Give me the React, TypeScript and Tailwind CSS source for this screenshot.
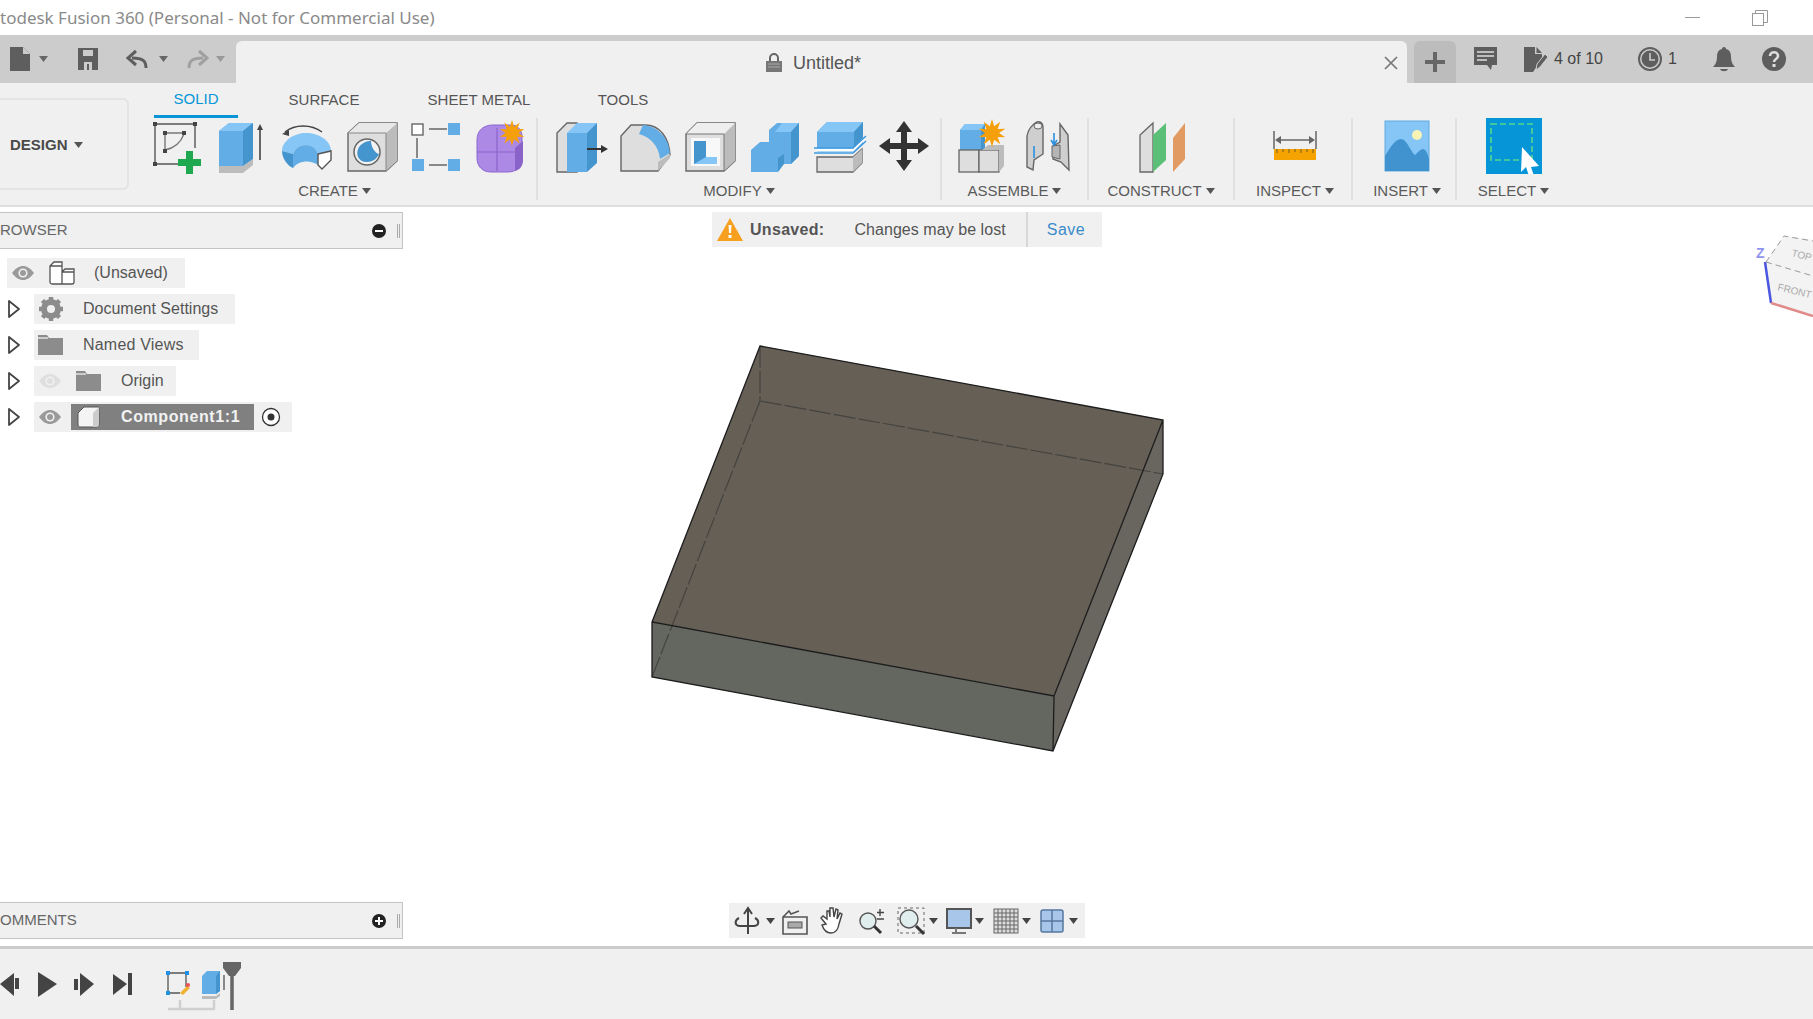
import React from "react";

const FONT = "[font-family:'Liberation_Sans',Arial,sans-serif]";

const Caret = ({ color = "#555", className = "" }: { color?: string; className?: string }) => (
    <svg width="9" height="6" viewBox="0 0 9 6" className={className}>
        <path d="M0 0h9L4.5 6z" fill={color} />
    </svg>
);

const Cell = ({ children, w = 64.7 }: { children: React.ReactNode; w?: number }) => (
    <div className="flex h-[56px] items-center justify-center" style={{ width: w }}>
        <svg width="56" height="56" viewBox="0 0 56 56">{children}</svg>
    </div>
);

const BLUE = "#62ade6";
const DARK = "#4494cd";
const LIGHT = "#86c6f7";
const GREY = "#dedede";
const SIDE = "#bcbcbc";
const LINE = "#666";

// toolbar icons
const SketchIcon = () => (
    <Cell>
        <g stroke="#555" strokeWidth="1.4" fill="none">
            <path d="M5 6h40M5 6v40M5 46h26M45 6v24" />
            <path d="M16 15h18M15 16v18M15 32c10-2 16-8 19-16" stroke="#777" />
        </g>
        <g fill="#444">
            <rect x="3" y="4" width="4" height="4" />
            <rect x="43" y="4" width="4" height="4" />
            <rect x="3" y="44" width="4" height="4" />
            <rect x="13" y="13" width="4" height="4" />
            <rect x="32" y="13" width="4" height="4" />
            <rect x="13" y="31" width="4" height="4" />
        </g>
        <path d="M36 33h7v8h8v7h-8v8h-7v-8h-8v-7h8z" fill="#1ea84f" />
    </Cell>
);
const ExtrudeIcon = () => (
    <Cell>
        <path d="M5 13l10-8h24v36l-10 7H5z" fill={BLUE} />
        <path d="M5 13l10-8h24l-10 8z" fill={LIGHT} />
        <path d="M29 13l10-8v36l-10 7z" fill={DARK} />
        <path d="M5 48h24l10-7v6l-10 8H5z" fill={SIDE} />
        <path d="M46 42V10" stroke="#444" strokeWidth="1.6" />
        <path d="M43 12l3-6 3 6z" fill="#444" />
    </Cell>
);
const RevolveIcon = () => (
    <Cell>
        <path d="M6 14c10-8 26-8 37 0" fill="none" stroke="#444" strokeWidth="1.5" />
        <path d="M3 16l7-4 0 6z" fill="#444" />
        <path d="M3 33c0-10 12-18 24-18s25 7 25 18l-13 3c-2-6-6-9-12-9s-11 3-13 9z" fill={LIGHT} />
        <path d="M3 33l11 3c1 5 1 10 0 14-5-2-11-9-11-17z" fill={DARK} />
        <path d="M14 36c2-6 7-9 13-9s10 3 12 9v11c-7-5-19-5-25 3z" fill={BLUE} />
        <path d="M39 36l13-3v9l-9 9-4-4z" fill="#fff" stroke="#555" strokeWidth="1.4" />
    </Cell>
);
const HoleIcon = () => (
    <Cell>
        <path d="M4 15L15 5h38v38L42 53H4z" fill={GREY} stroke={LINE} strokeWidth="1.4" />
        <path d="M42 15L53 5v38L42 53z" fill={SIDE} />
        <path d="M4 15L15 5h38L42 15z" fill="#e8e8e8" />
        <path d="M42 15H4M42 15v38" stroke="#888" strokeWidth="1" fill="none" />
        <circle cx="23" cy="34" r="13" fill="#f2f2f2" stroke={LINE} strokeWidth="1.5" />
        <path d="M15 29c4-5 8-6 12-6 0 6 4 12 8 13-2 5-7 8-12 8-9 0-12-8-8-15z" fill={DARK} />
    </Cell>
);
const PatternIcon = () => (
    <Cell>
        <path d="M8 20v20M20 11h18M20 47h18" stroke="#666" strokeWidth="1.5" />
        <rect x="3" y="6" width="11" height="11" fill="#fff" stroke="#666" strokeWidth="1.4" />
        <rect x="39" y="5" width="12" height="12" fill={BLUE} />
        <rect x="3" y="41" width="12" height="12" fill={BLUE} />
        <rect x="39" y="41" width="12" height="12" fill={BLUE} />
    </Cell>
);
const Star = ({ x, y, r }: { x: number; y: number; r: number }) => {
    const pts: string[] = [];
    for (let i = 0; i < 20; i++) {
        const a = (i * Math.PI) / 10;
        const rad = i % 2 ? r * 0.5 : r;
        pts.push(`${x + rad * Math.sin(a)},${y - rad * Math.cos(a)}`);
    }
    return <polygon points={pts.join(" ")} fill="#f59f0b" />;
};
const FormIcon = () => (
    <Cell>
        <path d="M4 22c0-10 7-15 16-15h18c6 0 10 4 11 10v24c0 8-6 13-14 13H18C9 54 4 48 4 40z" fill="#ad89e6" stroke="#8c67cf" strokeWidth="1" />
        <path d="M42 30l8-7v19c0 7-4 10-8 11z" fill="#8a63c8" />
        <path d="M4 34h38M24 10v43" stroke="#8a63c8" strokeWidth="1.2" />
        <Star x={39} y={15} r={13} />
    </Cell>
);
const PressPullIcon = () => (
    <Cell>
        <path d="M4 54V15L14 5h10v49z" fill={GREY} stroke={LINE} strokeWidth="1.4" />
        <path d="M14 15L24 5h20v4L34 15z" fill={LIGHT} />
        <path d="M14 15h20v39H14z" fill={BLUE} />
        <path d="M34 15L44 5v40L34 54z" fill={DARK} />
        <path d="M34 31h16" stroke="#333" strokeWidth="2" />
        <path d="M48 27l7 4-7 4z" fill="#333" />
    </Cell>
);
const FilletIcon = () => (
    <Cell>
        <path d="M4 53V18L14 7h14c16 0 24 14 25 30L41 53z" fill={GREY} stroke={LINE} strokeWidth="1.4" />
        <path d="M26 7c15 1 26 14 27 28l-10 6c-1-12-9-22-21-25z" fill={BLUE} />
        <path d="M41 53l12-13V36L41 44z" fill={SIDE} />
    </Cell>
);
const ShellIcon = () => (
    <Cell>
        <path d="M4 16L15 5h38v38L42 53H4z" fill={GREY} stroke={LINE} strokeWidth="1.4" />
        <path d="M42 16L53 5v38L42 53z" fill={SIDE} />
        <path d="M4 16L15 5h38L42 16z" fill="#eeeeee" />
        <path d="M42 16H4M42 16v37" stroke="#777" strokeWidth="1" />
        <rect x="9" y="20" width="29" height="28" fill="#f8f8f8" />
        <path d="M12 23h12v16h11v7H12z" fill={DARK} />
        <path d="M24 39h11v7H12z" fill={LIGHT} />
    </Cell>
);
const CombineIcon = () => (
    <Cell>
        <path d="M22 12l8-7h22v33l-8 8H26V28l-4-4z" fill={BLUE} />
        <path d="M28 14l7-9h17l-8 9z" fill={LIGHT} />
        <path d="M44 14l8-9v33l-8 8z" fill={DARK} />
        <path d="M4 32l9-8h18v30H4z" fill={BLUE} />
        <path d="M31 40l6-4v10l-6 8z" fill={DARK} />
    </Cell>
);
const OffsetIcon = () => (
    <Cell>
        <path d="M5 14L15 4h36v22L42 34H5z" fill={BLUE} />
        <path d="M5 14L15 4h36l-9 10z" fill={LIGHT} />
        <path d="M42 14l9-10v22l-9 8z" fill={DARK} />
        <path d="M5 32h36l11-11" fill="none" stroke="#fff" strokeWidth="3" />
        <path d="M2 30h39l13-12M2 35h39l13-12" fill="none" stroke="#3d9ae0" strokeWidth="1.6" />
        <path d="M5 39h36l9-8v14l-9 9H5z" fill={GREY} stroke={LINE} strokeWidth="1.3" />
        <path d="M41 39l9-8v14l-9 9z" fill={SIDE} />
    </Cell>
);
const MoveIcon = () => (
    <Cell>
        <path d="M28 3l8 11h-5v11h11v-5l11 8-11 8v-5H31v11h5l-8 11-8-11h5V31H14v5L3 28l11-8v5h11V14h-5z" fill="#333" />
    </Cell>
);
const NewComponentIcon = () => (
    <Cell>
        <path d="M6 12l5-6h20v26H6z" fill={BLUE} />
        <path d="M6 12l5-6h20l-4 6z" fill={LIGHT} />
        <path d="M27 12l4-6v26h-4z" fill={DARK} />
        <rect x="5" y="32" width="20" height="22" fill={GREY} stroke={LINE} strokeWidth="1.3" />
        <rect x="25" y="32" width="20" height="22" fill={GREY} stroke={LINE} strokeWidth="1.3" />
        <path d="M28 32l6-5h16v21l-5 6V32z" fill={SIDE} />
        <Star x={38} y={15} r={14} />
    </Cell>
);
const JointIcon = () => (
    <Cell>
        <path d="M8 18c1-7 6-12 10-14 3-1 6 1 6 5v27l-9 6-1 10-6-3z" fill="#cfcfcf" stroke="#666" strokeWidth="1.4" />
        <ellipse cx="19" cy="8" rx="4" ry="3" fill="#eee" stroke="#666" />
        <path d="M34 28l7-4 0-18 8 11 1 35-8-8-8-3z" fill="#cfcfcf" stroke="#666" strokeWidth="1.4" />
        <path d="M33 28l8-1v14l-8-2z" fill="#b5b5b5" stroke="#666" />
        <path d="M35 15v12M32 22l3 5 3-5M15 28v12" stroke="#2a8fdc" strokeWidth="1.6" fill="none" />
    </Cell>
);
const PlaneIcon = () => (
    <Cell>
        <path d="M7 17L20 5v49H7z" fill={GREY} stroke={LINE} strokeWidth="1.3" />
        <path d="M20 17L33 5v37L20 54z" fill="#5cbf78" />
        <path d="M40 20L52 5v36L40 54z" fill="#e29a63" />
    </Cell>
);
const RulerIcon = () => (
    <Cell>
        <path d="M7 13v18M49 13v18M10 22h36" stroke="#666" strokeWidth="1.5" />
        <path d="M8 22l6-4v8zM48 22l-6-4v8z" fill="#666" />
        <rect x="7" y="31" width="42" height="11" fill="#f5a300" />
        <path d="M10 31v4M16 31v3M22 31v4M28 31v3M34 31v4M40 31v3M46 31v4" stroke="#8a6a20" strokeWidth="1.2" />
    </Cell>
);
const PictureIcon = () => (
    <Cell>
        <rect x="6" y="3" width="44" height="50" fill={LIGHT} stroke="#5fa9df" />
        <circle cx="38" cy="17" r="5" fill="#f6f3b4" />
        <path d="M6 38c5-8 10-17 16-17s9 12 14 16c3-3 6-6 8-6 3 0 5 6 6 10v12H6z" fill="#4193cf" />
    </Cell>
);
const SelectIcon = () => (
    <Cell>
        <rect x="0" y="0" width="56" height="56" fill="#0696d7" />
        <rect x="5" y="6" width="41" height="36" fill="none" stroke="#54d78e" strokeWidth="1.6" strokeDasharray="6 3" />
        <path d="M36 29l17 19-8 1 3 9-5 0-3-9-5 5z" fill="#fff" />
    </Cell>
);

const Group = ({ label, children, w, extra = "" }: { label: string; children: React.ReactNode; w: number; extra?: string }) => (
    <div className={`flex flex-col items-center ${extra}`} style={{ width: w }}>
        <div className="flex">{children}</div>
        <div className="mt-[7px] flex items-center gap-[4px] text-[15px] leading-[20px] text-[#5a5a5a]">
            {label}
            <Caret />
        </div>
    </div>
);

const Eye = ({ color = "#9a9a9a" }: { color?: string }) => (
    <svg width="24" height="16" viewBox="0 0 24 16">
        <path d="M1 8c4-5 7-7 11-7s7 2 11 7c-4 5-7 7-11 7S5 13 1 8z" fill={color} />
        <circle cx="12" cy="8" r="4.6" fill="#f0f0f0" />
        <circle cx="12" cy="8" r="3" fill={color} />
    </svg>
);
const Folder = () => (
    <svg width="25" height="20" viewBox="0 0 25 20">
        <path d="M0 0h9l2 3h14v17H0z" fill="#8c8c8c" />
        <path d="M0 3h10" stroke="#e8e8e8" strokeWidth="1.4" />
    </svg>
);
const Chevron = () => (
    <svg width="14" height="20" viewBox="0 0 14 20" className="ml-[7px] mr-[13px]">
        <path d="M2 2l10 8-10 8z" fill="#fff" stroke="#444" strokeWidth="1.8" strokeLinejoin="round" />
    </svg>
);

const Row = ({ children, chev = true, w }: { children: React.ReactNode; chev?: boolean; w: number }) => (
    <div className={`flex h-[36px] items-center ${chev ? "" : "pl-[7px]"}`}>
        {chev && <Chevron />}
        <div className="flex h-[30px] items-center bg-[#f0f0f0] text-[16px] text-[#555]" style={{ width: w }}>
            {children}
        </div>
    </div>
);

const PanelHead = ({ title, plus }: { title: string; plus?: boolean }) => (
    <div className="flex h-[37px] w-[403px] items-center justify-between border-y border-r border-[#c4c4c4] bg-[#f0f0f0] text-[15px] text-[#666]">
        <span>{title}</span>
        <div className="flex items-center gap-[11px] pr-[2px]">
            <svg width="14" height="14" viewBox="0 0 14 14">
                <circle cx="7" cy="7" r="7" fill="#222" />
                <path d={plus ? "M3 7h8M7 3v8" : "M3 7h8"} stroke="#fff" strokeWidth="2" />
            </svg>
            <div className="h-[14px] w-[3px] border-x border-[#aaa]" />
        </div>
    </div>
);

const NavIcon = ({ children, w = 30, h = 30 }: { children: React.ReactNode; w?: number; h?: number }) => (
    <svg width={w} height={h} viewBox={`0 0 ${w} ${h}`}>{children}</svg>
);

export default function App() {
    return (
        <div className={`flex h-[1019px] w-[1813px] flex-col overflow-hidden bg-white ${FONT}`}>
            {/* window title */}
            <div className="flex h-[35px] items-center justify-between bg-white">
                <span className="text-[17px] text-[#8a8a8a] [font-family:'Noto_Sans',sans-serif]">todesk Fusion 360 (Personal - Not for Commercial Use)</span>
                <div className="flex items-center gap-[52px] pr-[45px]">
                    <div className="h-px w-[15px] bg-[#999]" />
                    <svg width="16" height="16" viewBox="0 0 16 16" fill="none" stroke="#999">
                        <rect x="0.5" y="3.5" width="11" height="12" fill="#fff" />
                        <path d="M3.5 3V.5h12v12H12" />
                    </svg>
                </div>
            </div>

            {/* quick access + document tab */}
            <div className="flex h-[48px] bg-[#cccccc] pt-[6px]">
                <div className="flex w-[236px] items-center pb-[6px]">
                    <svg width="22" height="26" viewBox="0 0 22 26" className="ml-[9px]">
                        <path d="M1 1h13l7 7v17H1z" fill="#5e5e5e" />
                        <path d="M14 1v7h7" fill="#ccc" />
                    </svg>
                    <Caret color="#666" className="ml-[8px]" />
                    <svg width="22" height="24" viewBox="0 0 22 24" className="ml-[29px]">
                        <path d="M1 1h20v22H1z" fill="#5e5e5e" />
                        <path d="M6 3h10v6H6zM7 15h8v8H7z" fill="#ccc" />
                        <path d="M10 17h2v6h-2z" fill="#5e5e5e" />
                    </svg>
                    <svg width="22" height="20" viewBox="0 0 22 20" className="ml-[27px]">
                        <path d="M20 19c0-7-3-10-14-10" fill="none" stroke="#5e5e5e" strokeWidth="3" />
                        <path d="M10 2L2 9l8 7" fill="none" stroke="#5e5e5e" strokeWidth="3" />
                    </svg>
                    <Caret color="#666" className="ml-[11px]" />
                    <svg width="22" height="20" viewBox="0 0 22 20" className="ml-[19px]">
                        <path d="M2 19c0-7 3-10 14-10" fill="none" stroke="#a0a0a0" strokeWidth="3" />
                        <path d="M12 2l8 7-8 7" fill="none" stroke="#a0a0a0" strokeWidth="3" />
                    </svg>
                    <Caret color="#999" className="ml-[7px]" />
                </div>
                <div className="relative flex w-[1171px] items-center justify-center rounded-t-[6px] bg-[#f0f0f0] pt-[2px] text-[18px] text-[#555]">
                    <svg width="18" height="20" viewBox="0 0 18 20" className="mr-[10px] -ml-[17px]">
                        <path d="M5 8V5a4 4 0 018 0v3" fill="none" stroke="#666" strokeWidth="2" />
                        <rect x="1" y="8" width="16" height="11" fill="#777" />
                        <path d="M3 11h12M3 14h12" stroke="#aaa" />
                    </svg>
                    Untitled*
                    <svg width="14" height="14" viewBox="0 0 14 14" className="absolute right-[9px] top-[15px]">
                        <path d="M1 1l12 12M13 1L1 13" stroke="#777" strokeWidth="1.7" />
                    </svg>
                </div>
                <div className="ml-[7px] flex h-[42px] w-[42px] items-center justify-center rounded-t-[6px] bg-[#bcbcbc]">
                    <svg width="20" height="20" viewBox="0 0 20 20">
                        <path d="M8 0h4v8h8v4h-8v8H8v-8H0V8h8z" fill="#666" />
                    </svg>
                </div>
                <div className="flex items-center pb-[6px] text-[16px] text-[#444]">
                    <svg width="25" height="26" viewBox="0 0 25 26" className="ml-[17px]">
                        <path d="M1 1h23v18h-5l-1 5-4-5H1z" fill="#5e5e5e" />
                        <path d="M4 6h17M4 10h17M4 14h10" stroke="#ddd" strokeWidth="1.3" />
                    </svg>
                    <svg width="26" height="27" viewBox="0 0 26 27" className="ml-[25px]">
                        <path d="M1 1h11v7h7v5l-9 13H1z" fill="#5e5e5e" />
                        <path d="M13.500 1l5.500 6h-5.500z" fill="#5e5e5e" />
                        <path d="M13 24l1-6 8-10 3 3-8 10z" fill="#5e5e5e" stroke="#ccc" />
                    </svg>
                    <span className="ml-[5px] w-[52px]">4 of 10</span>
                    <svg width="24" height="24" viewBox="0 0 24 24" className="ml-[32px]">
                        <circle cx="12" cy="12" r="11" fill="none" stroke="#5e5e5e" strokeWidth="2" />
                        <circle cx="12" cy="12" r="8.500" fill="#5e5e5e" />
                        <path d="M12 6v7h5" fill="none" stroke="#ccc" strokeWidth="1.600" />
                    </svg>
                    <span className="ml-[6px]">1</span>
                    <svg width="22" height="26" viewBox="0 0 22 26" className="ml-[36px]">
                        <path d="M11 1c1.500 0 2 1 2 2 4 1 5 4 5 8 0 5 2 8 4 10H0c2-2 4-5 4-10 0-4 1-7 5-8 0-1 .5-2 2-2z" fill="#5e5e5e" />
                        <path d="M7 23h8c-1 3-7 3-8 0z" fill="#5e5e5e" />
                    </svg>
                    <svg width="24" height="24" viewBox="0 0 24 24" className="ml-[27px]">
                        <circle cx="12" cy="12" r="12" fill="#5e5e5e" />
                        <path d="M8 9c0-5 8-5 8 0 0 3-4 3-4 6" fill="none" stroke="#ddd" strokeWidth="2.600" />
                        <rect x="10.500" y="17" width="3" height="3" fill="#ddd" />
                    </svg>
                </div>
            </div>

            {/* ribbon */}
            <div className="flex h-[122px] bg-[#f0f0f0]">
                <div className="w-[143px] pt-[15px]">
                    <div className="flex h-[92px] w-[129px] items-center rounded-r-[6px] border-2 border-l-0 border-[#e4e4e4] pl-[10px] pt-[2px] text-[15px] font-bold text-[#4a4a4a]">
                        DESIGN
                        <Caret className="ml-[6px]" />
                    </div>
                </div>
                <div className="flex flex-col">
                    <div className="flex h-[35px] pl-[11px] text-[15px] text-[#555]">
                        <div className="flex h-[35px] w-[84px] items-center justify-center border-b-[3px] border-[#0696d7] text-[#0696d7]">SOLID</div>
                        <div className="flex w-[172px] items-center justify-center">SURFACE</div>
                        <div className="flex w-[138px] items-center justify-center">SHEET METAL</div>
                        <div className="flex w-[150px] items-center justify-center">TOOLS</div>
                    </div>
                    <div className="flex h-[87px] items-start">
                        <div className="flex h-[82px] w-[395px] border-r-2 border-[#e0e0e0]">
                            <Group label="CREATE" w={393} extra="pr-[10px]">
                                <div className="w-[10px]" />
                                <SketchIcon />
                                <ExtrudeIcon />
                                <RevolveIcon />
                                <HoleIcon />
                                <PatternIcon />
                                <FormIcon />
                            </Group>
                        </div>
                        <div className="h-[82px] w-[404px] border-r-2 border-[#e0e0e0]">
                            <Group label="MODIFY" w={402}>
                                <div className="w-[7px]" />
                                <PressPullIcon />
                                <FilletIcon />
                                <ShellIcon />
                                <CombineIcon />
                                <OffsetIcon />
                                <MoveIcon />
                            </Group>
                        </div>
                        <div className="h-[82px] w-[147px] border-r-2 border-[#e0e0e0]">
                            <Group label="ASSEMBLE" w={145}>
                                <NewComponentIcon />
                                <JointIcon />
                            </Group>
                        </div>
                        <div className="h-[82px] w-[146px] border-r-2 border-[#e0e0e0]">
                            <Group label="CONSTRUCT" w={144}>
                                <PlaneIcon />
                            </Group>
                        </div>
                        <div className="h-[82px] w-[118px] border-r-2 border-[#e0e0e0]">
                            <Group label="INSPECT" w={116} extra="pl-[4px]">
                                <RulerIcon />
                            </Group>
                        </div>
                        <div className="h-[82px] w-[104px] border-r-2 border-[#e0e0e0]">
                            <Group label="INSERT" w={102} extra="pl-[6px]">
                                <PictureIcon />
                            </Group>
                        </div>
                        <Group label="SELECT" w={113}>
                            <SelectIcon />
                        </Group>
                    </div>
                </div>
            </div>
            <div className="h-[2px] bg-[#dedede]" />

            {/* canvas */}
            <div className="relative flex h-[739px] flex-col justify-between pb-[7px] pt-[5px]">
                <div>
                    <PanelHead title="ROWSER" />
                    <div className="mt-[6px]">
                        <Row chev={false} w={178}>
                            <span className="ml-[4px] flex"><Eye /></span>
                            <svg width="26" height="24" viewBox="0 0 26 24" className="ml-[14px]">
                                <path d="M1 5l4-4h8v22H3c-1 0-2-1-2-2zM13 11l3-3h9v13c0 1-1 2-2 2H13zM1 5h12M13 11h12" fill="#fff" stroke="#555" strokeWidth="1.3" />
                            </svg>
                            <span className="ml-[19px]">(Unsaved)</span>
                        </Row>
                        <Row w={201}>
                            <svg width="26" height="26" viewBox="0 0 26 26" className="ml-[4px]">
                                <circle cx="13" cy="13" r="7" fill="none" stroke="#8c8c8c" strokeWidth="6" />
                                <path d="M13 1v24M1 13h24M4.500 4.500l17 17M21.500 4.500l-17 17" stroke="#8c8c8c" strokeWidth="4.500" strokeDasharray="4.500 16 4.500 100" />
                            </svg>
                            <span className="ml-[19px]">Document Settings</span>
                        </Row>
                        <Row w={165}>
                            <span className="ml-[4px] flex"><Folder /></span>
                            <span className="ml-[20px] tracking-[0.2px]">Named Views</span>
                        </Row>
                        <Row w={142}>
                            <span className="ml-[4px] flex opacity-30"><Eye color="#bbb" /></span>
                            <span className="ml-[14px] flex"><Folder /></span>
                            <span className="ml-[20px]">Origin</span>
                        </Row>
                        <Row w={258}>
                            <span className="ml-[4px] flex"><Eye /></span>
                            <div className="ml-[9px] flex h-[26px] w-[183px] items-center bg-[#808080]">
                                <svg width="24" height="24" viewBox="0 0 24 24" className="ml-[5px]">
                                    <path d="M2 8l6-6h15v17c0 2-1 3-3 3H4c-1 0-2-1-2-3z" fill="#f4f4f4" stroke="#555" />
                                    <path d="M17 8l6-6v17c0 2-1 3-3 3h-3z" fill="#ccc" />
                                </svg>
                                <span className="ml-[21px] font-bold tracking-[0.6px] text-[#f2f2f2]">Component1:1</span>
                            </div>
                            <svg width="20" height="20" viewBox="0 0 20 20" className="ml-[7px]">
                                <circle cx="10" cy="10" r="8.500" fill="#fff" stroke="#333" strokeWidth="1.3" />
                                <circle cx="10" cy="10" r="3.500" fill="#333" />
                            </svg>
                        </Row>
                    </div>
                </div>
                <PanelHead title="OMMENTS" plus />

                {/* unsaved banner */}
                <div className="absolute left-[712px] top-[5px] flex h-[35px] w-[390px] items-center bg-[#f0f0f0] text-[16px] text-[#555]">
                    <svg width="26" height="23" viewBox="0 0 26 23" className="ml-[5px]">
                        <path d="M13 0l13 23H0z" fill="#f79f1f" />
                        <path d="M11.500 7h3l-.5 8h-2zM11.500 17h3v3h-3z" fill="#fff" />
                    </svg>
                    <span className="ml-[7px] font-bold tracking-[0.3px]">Unsaved:</span>
                    <span className="ml-[30px] tracking-[0.05px]">Changes may be lost</span>
                    <div className="ml-[20px] h-[35px] w-[2px] bg-[#d8d8d8]" />
                    <span className="ml-[19px] tracking-[0.5px] text-[#3a8bc9]">Save</span>
                </div>

                {/* model */}
                <svg width="530" height="420" viewBox="640 340 530 420" className="absolute left-[640px] top-[133px]">
                    <path d="M760 346L1163 420 1054 696 652 622z" fill="#655f56" />
                    <path d="M652 622L1054 696 1053 751 652 677z" fill="#646660" />
                    <path d="M1163 420L1163 474 1053 751 1054 696z" fill="#696660" />
                    <g fill="none" stroke="#3c3c38" strokeWidth="1.200" opacity=".8" strokeDasharray="22 3">
                        <path d="M760 346V401M760 401L1163 474M760 401L652 677" />
                    </g>
                    <path d="M760 346L1163 420 1054 696 652 622zM652 622V677L1053 751 1163 474V420M1054 696L1053 751" fill="none" stroke="#1c1c1c" strokeWidth="1.300" />
                </svg>

                {/* view cube */}
                <svg width="70" height="90" viewBox="1750 235 70 90" className="absolute left-[1750px] top-[28px]">
                    <path d="M1771 303L1766 262 1784 236 1813 240V316z" fill="#f3f3f3" />
                    <path d="M1766 262L1784 236 1813 241M1766 262L1813 276" fill="none" stroke="#999" strokeWidth="1" strokeDasharray="6 4" />
                    <path d="M1765 262L1771 303" stroke="#4a55e0" strokeWidth="2.500" />
                    <path d="M1771 303L1813 316" stroke="#e08a8a" strokeWidth="2.500" />
                    <text x="1756" y="258" fontSize="14" fontWeight="bold" fill="#8f94ef">Z</text>
                    <text x="1791" y="256" fontSize="10" fill="#aaa" transform="rotate(14 1791 256)">TOP</text>
                    <text x="1777" y="290" fontSize="10" fill="#aaa" transform="rotate(14 1777 290)">FRONT</text>
                </svg>

                {/* navigation bar */}
                <div className="absolute left-[729px] top-[696px] flex h-[35px] w-[356px] items-center bg-[#f0f0f0] pl-[4px]">
                    <NavIcon>
                        <path d="M15 2v26M11 8l4-6 4 6" fill="none" stroke="#444" strokeWidth="2" />
                        <path d="M22 12c4 2 5 7-1 8H6c-5-1-4-6 0-8" fill="none" stroke="#444" strokeWidth="2" />
                    </NavIcon>
                    <Caret color="#444" className="ml-[3px]" />
                    <span className="ml-[4px] flex">
                        <NavIcon>
                            <path d="M4 11h24v17H4zM4 11l6-6 2 3 8-3" fill="none" stroke="#555" strokeWidth="1.6" />
                            <rect x="9" y="16" width="14" height="6" fill="#aaa" stroke="#555" />
                        </NavIcon>
                    </span>
                    <span className="ml-[9px] flex">
                        <NavIcon>
                            <path d="M8 18L3 12l2-2 4 3 0-8 2 0 1 6 0-9 3 0 1 9 2-8 2 1-1 9 3-6 2 1-3 10c-1 6-3 9-8 9-4 0-7-2-9-8z" fill="#fff" stroke="#444" strokeWidth="1.4" />
                        </NavIcon>
                    </span>
                    <span className="ml-[9px] flex">
                        <NavIcon>
                            <circle cx="11" cy="15" r="8" fill="#e1eeee" stroke="#555" strokeWidth="1.4" />
                            <path d="M17 20l7 7" stroke="#333" strokeWidth="3" />
                            <path d="M23 3v7M20 6.500h7M20 13h7" stroke="#444" strokeWidth="1.4" />
                        </NavIcon>
                    </span>
                    <span className="ml-[9px] flex">
                        <NavIcon>
                            <rect x="2" y="2" width="26" height="25" fill="none" stroke="#666" strokeDasharray="3 3" />
                            <circle cx="13" cy="13" r="9" fill="#e1eeee" stroke="#555" strokeWidth="1.4" />
                            <path d="M20 20l8 8" stroke="#333" strokeWidth="3" />
                        </NavIcon>
                    </span>
                    <Caret color="#444" className="ml-[3px]" />
                    <span className="ml-[7px] flex">
                        <NavIcon>
                            <rect x="2" y="3" width="24" height="19" fill="#a8c6ea" stroke="#555" strokeWidth="2" />
                            <path d="M11 22v4M7 27h14" stroke="#777" strokeWidth="2" />
                        </NavIcon>
                    </span>
                    <Caret color="#444" />
                    <span className="ml-[8px] flex">
                        <NavIcon>
                            <rect x="2" y="3" width="24" height="24" fill="#ddd" stroke="#666" />
                            <path d="M6 3v24M10 3v24M14 3v24M18 3v24M22 3v24M2 7h24M2 11h24M2 15h24M2 19h24M2 23h24" stroke="#666" />
                        </NavIcon>
                    </span>
                    <Caret color="#444" />
                    <span className="ml-[8px] flex">
                        <NavIcon>
                            <rect x="2" y="4" width="22" height="22" fill="#a8c6ea" stroke="#56779f" strokeWidth="1.500" rx="2" />
                            <path d="M13 4v22M2 15h22" stroke="#56779f" strokeWidth="1.500" />
                        </NavIcon>
                    </span>
                    <Caret color="#444" />
                </div>
            </div>

            {/* timeline */}
            <div className="h-[3px] bg-[#cccccc]" />
            <div className="flex h-[70px] bg-[#f0f0f0]">
                <svg width="250" height="70" viewBox="0 949 250 70">
                    <path d="M0 984l14-11v23zM15 978h4v11h-4z" fill="#444" />
                    <path d="M38 972l19 12-19 13z" fill="#444" />
                    <path d="M74 979h4v11h-4zM80 973l14 11-14 12z" fill="#444" />
                    <path d="M113 974l14 10-14 11zM128 973h4v22h-4z" fill="#444" />
                    <path d="M168 973h20M168 973v20M168 993h12M186 973v14" stroke="#555" strokeWidth="1.300" fill="none" />
                    <g fill="#1e90e6">
                        <rect x="166" y="971" width="4" height="4" />
                        <rect x="185" y="971" width="4" height="4" />
                        <rect x="166" y="991" width="4" height="4" />
                    </g>
                    <path d="M180 993l7-7 3 2-7 7z" fill="#f0b030" />
                    <circle cx="188" cy="985" r="2" fill="#f05050" />
                    <path d="M202 976l5-5h13v20l-4 3h-14z" fill="#62ade6" />
                    <path d="M216 976l4-5v20l-4 3z" fill="#4494cd" />
                    <path d="M202 996h14l4-3v3l-4 3h-14z" fill="#bbb" />
                    <path d="M224 975v15" stroke="#444" strokeWidth="1.200" />
                    <path d="M168 1009h47M180 1000v9M214 1000v9" stroke="#cfcfcf" strokeWidth="2.500" fill="none" />
                    <path d="M223 962h18v6l-6 8h-6l-6-8z" fill="#666" />
                    <path d="M232 970v40" stroke="#666" strokeWidth="3.500" />
                </svg>
            </div>
        </div>
    );
}
